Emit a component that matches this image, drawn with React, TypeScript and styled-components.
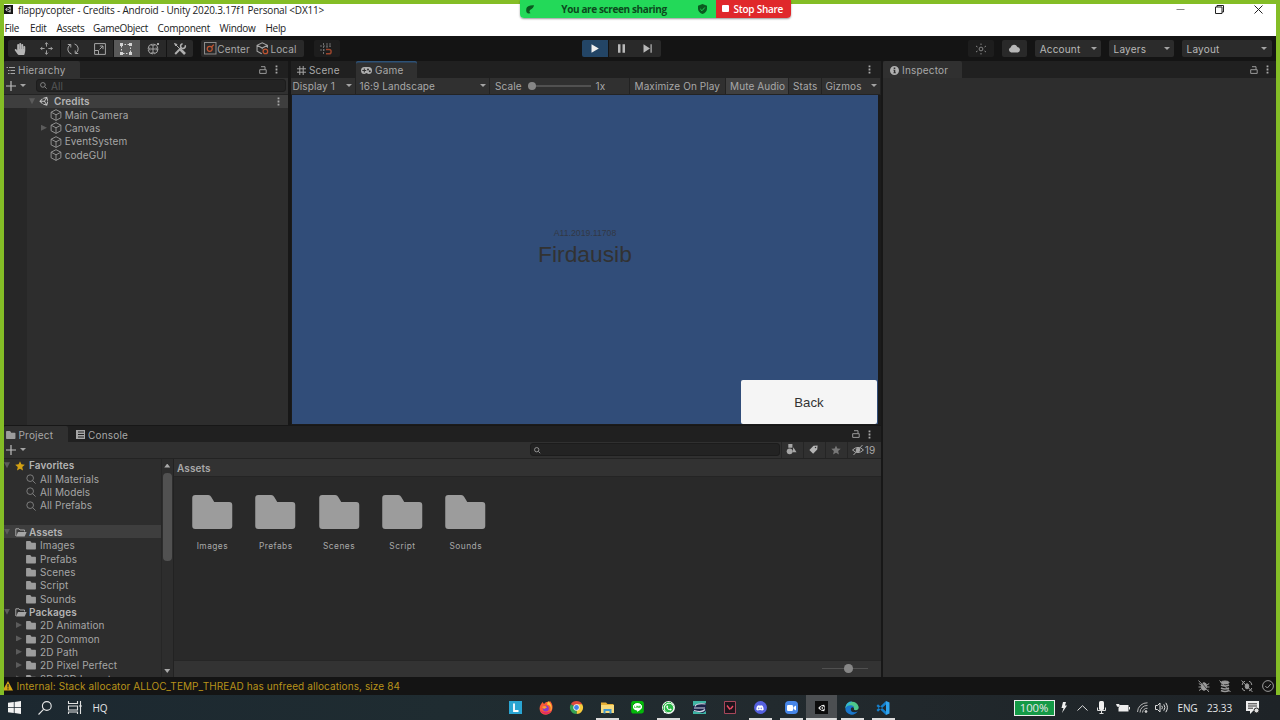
import React from "react";
import styled, { createGlobalStyle, css } from "styled-components";
import { FaUnity, FaHandPaper, FaWhatsapp, FaDiscord, FaLine } from "react-icons/fa";

const Global = createGlobalStyle`
  * { box-sizing: border-box; }
  body { margin: 0; background: #84bd26; overflow: hidden; }
`;

const ui = css`
  font-family: Inter, "Liberation Sans", sans-serif;
  font-size: 10px;
  letter-spacing: 0.1px;
  color: #a8a8a8;
`;
const win = css`
  font-family: "Open Sans", "Noto Sans", sans-serif;
  font-size: 10px;
`;

const Screen = styled.div`
  width: 1280px;
  height: 720px;
  display: flex;
  flex-direction: column;
  position: relative;
  overflow: hidden;
  white-space: nowrap;
  background: #84bd26;
  line-height: 1;
  ${ui}
`;
const Window = styled.div`
  margin: 4px 4px 0;
  height: 691px;
  display: flex;
  flex-direction: column;
  background: #161616;
`;
const Svg = styled.svg`
  display: block;
  flex: none;
  overflow: visible;
`;
const Label = styled.span`
  padding-top: 0.3px;
`;

/* title and menu */
const TitleBar = styled.div`
  ${win}
  height: 13px;
  padding-bottom: 2px;
  background: #fff;
  color: #222;
  display: flex;
  align-items: center;
  letter-spacing: -0.17px;
`;
const AppBadge = styled.div`
  width: 9px;
  height: 9px;
  margin-right: 5px;
  background: #161616;
  color: #ddd;
  font-size: 7px;
  display: flex;
  align-items: center;
  justify-content: center;
`;
const WindowButtons = styled.div`
  margin-left: auto;
  padding-right: 13px;
  display: flex;
  gap: 30px;
  align-items: center;
`;
const MenuBar = styled.div`
  ${win}
  height: 19px;
  padding: 2px 0 0 0.5px;
  background: #fff;
  color: #222;
  display: flex;
  align-items: center;
  letter-spacing: -0.3px;
`;
const MenuItem = styled.span<{ $w: number }>`
  width: ${(p) => p.$w}px;
`;

/* toolbar */
const Toolbar = styled.div`
  height: 25px;
  background: #141414;
  display: flex;
  align-items: center;
  padding: 0 4px 0 3.5px;
  ${Label} { padding-top: 1.6px; }
`;
const ButtonGroup = styled.div<{ $ml?: number }>`
  display: flex;
  gap: 0.6px;
  margin-left: ${(p) => p.$ml ?? 0}px;
`;
const ToolButton = styled.div<{ $w?: number; $tone?: "on" | "play" | "dim"; $start?: boolean }>`
  width: ${(p) => p.$w ?? 26}px;
  height: 17.5px;
  padding-left: ${(p) => (p.$start ? 3.5 : 0)}px;
  padding-right: ${(p) => (p.$start ? 0 : 1)}px;
  display: flex;
  align-items: center;
  justify-content: ${(p) => (p.$start ? "flex-start" : "center")};
  background: ${(p) => (p.$tone === "on" ? "#595959" : p.$tone === "play" ? "#234566" : p.$tone === "dim" ? "#1d1d1d" : "#292929")};
  &:first-child { border-radius: 2px 0 0 2px; }
  &:last-child { border-radius: 0 2px 2px 0; }
  &:only-child { border-radius: 2px; }
`;
const DropButton = styled.div<{ $w: number; $ml: number }>`
  width: ${(p) => p.$w}px;
  margin-left: ${(p) => p.$ml}px;
  height: 17.5px;
  padding: 0 4.5px;
  border-radius: 2px;
  display: flex;
  align-items: center;
  justify-content: space-between;
  background: #2b2b2b;
  color: #b8b8b8;
  letter-spacing: 0.2px;
`;
const Caret = styled.i`
  border: 3.2px solid transparent;
  border-top: 3.8px solid #a4a4a4;
  border-bottom: 0;
  flex: none;
`;

/* docks */
const Workspace = styled.div`
  height: 616px;
  display: flex;
  gap: 2px;
  background: #171717;
`;
const MainColumn = styled.div`
  width: 877px;
  display: flex;
  flex-direction: column;
  gap: 1px;
`;
const UpperRow = styled.div`
  height: 364px;
  display: flex;
  gap: 3px;
`;
const Panel = styled.section<{ $w: number }>`
  width: ${(p) => p.$w}px;
  display: flex;
  flex-direction: column;
  background: #2d2d2d;
  overflow: hidden;
`;
const TabStrip = styled.div<{ $h?: number }>`
  height: ${(p) => p.$h ?? 17}px;
  flex: none;
  display: flex;
  background: #202020;
`;
const Tab = styled.div<{ $w: number; $on?: boolean; $focus?: boolean; $pl?: number }>`
  width: ${(p) => p.$w}px;
  padding-left: ${(p) => p.$pl ?? 2}px;
  padding-top: 1px;
  display: flex;
  align-items: center;
  gap: 3px;
  letter-spacing: 0.2px;
  border-radius: 2px 2px 0 0;
  background: ${(p) => (p.$on ? "#303030" : "transparent")};
  box-shadow: ${(p) => (p.$focus ? "inset 0 1.5px #2c5177" : "none")};
`;
const StripActions = styled.div<{ $pr: number }>`
  margin-left: auto;
  padding-right: ${(p) => p.$pr}px;
  display: flex;
  align-items: center;
  gap: 8px;
`;
const PanelBar = styled.div`
  height: 16.5px;
  flex: none;
  display: flex;
  align-items: center;
  background: #303030;
  border-bottom: 1px solid #232323;
`;
const AddButton = styled.div`
  width: 32px;
  padding-left: 1.5px;
  display: flex;
  align-items: center;
  gap: 4px;
`;
const SearchField = styled.div<{ $w: number; $ml?: number }>`
  width: ${(p) => p.$w}px;
  margin-left: ${(p) => p.$ml ?? 0}px;
  height: 13px;
  border-radius: 3px;
  border: 1px solid #1c1c1c;
  background: #232323;
  color: #565656;
  display: flex;
  align-items: center;
  padding-left: 3px;
  gap: 4px;
`;

/* trees */
const Tree = styled.div<{ $gutter?: boolean }>`
  flex: 1;
  overflow: hidden;
  background: ${(p) => (p.$gutter ? "linear-gradient(90deg, #272727 23px, #2d2d2d 23px)" : "#2d2d2d")};
`;
const TreeRow = styled.div<{ $pl: number; $on?: boolean; $bold?: boolean }>`
  height: 13.34px;
  padding-left: ${(p) => p.$pl}px;
  padding-right: 8px;
  display: flex;
  align-items: center;
  font-weight: ${(p) => (p.$bold ? 600 : 400)};
  color: ${(p) => (p.$bold ? "#b4b4b4" : "#a6a6a6")};
  background: ${(p) => (p.$on ? "#3e3e3e" : "transparent")};
`;
const Fold = styled.i<{ $open?: boolean }>`
  width: 6px;
  height: 6px;
  flex: none;
  background: #5b5b5b;
  clip-path: ${(p) => (p.$open ? "polygon(0 0, 100% 0, 50% 100%)" : "polygon(0 0, 100% 50%, 0 100%)")};
`;
const RowIcon = styled.span<{ $ml?: number; $w?: number }>`
  width: ${(p) => p.$w ?? 14}px;
  margin-left: ${(p) => p.$ml ?? 0}px;
  padding-top: 0.8px;
  flex: none;
  display: flex;
  align-items: center;
`;
const Push = styled.span`
  margin-left: auto;
`;

/* game view */
const GameCell = styled.div<{ $w: number; $on?: boolean; $pl?: number; $between?: boolean }>`
  width: ${(p) => p.$w}px;
  height: 100%;
  padding: 0 3px 0 ${(p) => p.$pl ?? 4}px;
  display: flex;
  align-items: center;
  justify-content: ${(p) => (p.$between ? "space-between" : "flex-start")};
  border-right: 1px solid #222;
  background: ${(p) => (p.$on ? "#404040" : "transparent")};
`;
const ScaleTrack = styled.div`
  width: 63px;
  margin: 0 5px 0 6px;
  height: 1.5px;
  background: #515151;
  display: flex;
  align-items: center;
`;
const Knob = styled.i`
  width: 8.5px;
  height: 8.5px;
  border-radius: 50%;
  background: #868686;
  flex: none;
`;
const GameView = styled.div`
  flex: 1;
  padding: 0 3px 1px 1px;
  background: #1b1b1b;
  display: flex;
`;
const Scene = styled.div`
  flex: 1;
  background: #314d79;
  font-family: "Liberation Sans", Arial, sans-serif;
  letter-spacing: 0;
  color: #323232;
  display: flex;
  flex-direction: column;
  align-items: center;
`;
const StudentId = styled.div`
  margin-top: 134px;
  font-size: 8.7px;
  color: #323844;
`;
const StudentName = styled.div`
  margin-top: 6px;
  font-size: 22.8px;
`;
const BackButton = styled.div`
  width: 136px;
  height: 44px;
  margin: auto 1px 0 auto;
  padding-top: 1px;
  border-radius: 2px;
  background: #f5f5f5;
  display: flex;
  align-items: center;
  justify-content: center;
  font-size: 13.2px;
`;

/* project */
const ProjectPanel = styled.section`
  height: 251px;
  display: flex;
  flex-direction: column;
  background: #2d2d2d;
`;
const ProjectBody = styled.div`
  flex: 1;
  min-height: 0;
  display: flex;
`;
const TreePane = styled.div`
  width: 157px;
  display: flex;
  overflow: hidden;
`;
const ScrollBar = styled.div`
  width: 12.5px;
  border-left: 1px solid #262626;
  border-right: 1px solid #222;
  display: flex;
  flex-direction: column;
  align-items: center;
  padding: 5px 0 4px;
`;
const ScrollArrow = styled.i<{ $down?: boolean }>`
  width: 6px;
  height: 4px;
  background: #aaa;
  clip-path: ${(p) => (p.$down ? "polygon(0 0, 100% 0, 50% 100%)" : "polygon(50% 0, 100% 100%, 0 100%)")};
`;
const ScrollThumb = styled.div`
  width: 9px;
  height: 88px;
  margin: 5px 0 auto;
  border-radius: 4px;
  background: #515151;
`;
const AssetPane = styled.div`
  flex: 1;
  display: flex;
  flex-direction: column;
  background: #292929;
`;
const PathBar = styled.div`
  height: 18px;
  padding: 1px 0 0 3.5px;
  display: flex;
  align-items: center;
  font-weight: 600;
  background: #323232;
  border-bottom: 1px solid #242424;
  ${Label} { padding-top: 1.6px; }
`;
const AssetGrid = styled.div`
  flex: 1;
  padding: 18px 0 0 7.2px;
  display: flex;
`;
const AssetItem = styled.div`
  width: 63.35px;
  display: flex;
  flex-direction: column;
  align-items: center;
  gap: 13px;
  font-size: 8.4px;
  letter-spacing: 0.45px;
`;
const AssetFooter = styled.div`
  height: 17px;
  padding-right: 13px;
  padding-bottom: 1px;
  display: flex;
  align-items: center;
  justify-content: flex-end;
  background: #333;
  border-top: 1px solid #262626;
`;
const ZoomTrack = styled.div`
  width: 46px;
  height: 1.5px;
  background: #505050;
  display: flex;
  align-items: center;
  justify-content: center;
  padding-left: 7px;
`;
const FilterCell = styled.div<{ $w: number }>`
  width: ${(p) => p.$w}px;
  height: 100%;
  border-left: 1px solid #252525;
  padding-right: 1.5px;
  display: flex;
  align-items: center;
  justify-content: center;
`;

const StatusBar = styled.div`
  height: 18px;
  display: flex;
  align-items: center;
  background: #141414;
  color: #b8921a;
  gap: 3.5px;
`;
const StatusIcons = styled.div`
  margin-left: auto;
  padding-right: 2px;
  display: flex;
  gap: 9.5px;
`;

/* taskbar */
const Taskbar = styled.div`
  ${win}
  height: 25px;
  display: flex;
  background: linear-gradient(90deg, #1c2830, #1f2c31 35%, #222a2e 60%, #1e2327);
  color: #e4e6e8;
  letter-spacing: 0;
`;
const TaskLeft = styled.div`
  width: 500px;
  display: flex;
  align-items: center;
`;
const TaskCell = styled.div<{ $w: number }>`
  width: ${(p) => p.$w}px;
  flex: none;
  display: flex;
  align-items: center;
  justify-content: center;
`;
const TaskApp = styled.div<{ $open?: boolean; $active?: boolean }>`
  width: 30.65px;
  display: flex;
  align-items: center;
  justify-content: center;
  background:
    linear-gradient(${(p) => (p.$open || p.$active ? "#dcdcdc, #dcdcdc" : "transparent, transparent")}) center bottom / ${(p) => (p.$active ? "100%" : "23px")} 2px no-repeat,
    ${(p) => (p.$active ? "#4c4f52" : "transparent")};
`;
const Tile = styled.div<{ $bg: string; $fg?: string; $round?: string; $fs?: number }>`
  width: 13px;
  height: 13px;
  background: ${(p) => p.$bg};
  color: ${(p) => p.$fg ?? "#fff"};
  border-radius: ${(p) => p.$round ?? "0"};
  font-size: ${(p) => p.$fs ?? 10}px;
  display: flex;
  align-items: center;
  justify-content: center;
`;
const Tray = styled.div`
  margin-left: auto;
  display: flex;
  align-items: center;
  padding-right: 13px;
  letter-spacing: -0.1px;
`;
const Charge = styled.div`
  width: 41px;
  height: 16px;
  margin-right: 1.5px;
  border: 1.5px solid #eee;
  background: #149a46;
  font-size: 11.3px;
  display: flex;
  align-items: center;
  justify-content: center;
`;

/* share banner */
const ShareBanner = styled.div`
  ${win}
  position: absolute;
  left: 520px;
  top: 0;
  width: 271px;
  height: 18px;
  display: flex;
  border-radius: 0 0 4px 4px;
  overflow: hidden;
  box-shadow: 0 1px 2px #0006;
`;
const ShareStatus = styled.div`
  width: 196px;
  padding: 0 9px 0 6px;
  display: flex;
  align-items: center;
  justify-content: space-between;
  background: #23d959;
  color: #0b4a1d;
  font-weight: 700;
  letter-spacing: -0.38px;
`;
const ShareText = styled.span`
  padding-right: 4px;
`;
const StopShare = styled.div`
  flex: 1;
  padding: 0 0 1px 5.5px;
  display: flex;
  align-items: center;
  gap: 5px;
  background: #e0282b;
  color: #fff;
  font-weight: 600;
  letter-spacing: -0.25px;
`;
const StopSquare = styled.i`
  width: 7px;
  height: 7px;
  border-radius: 1px;
  background: #fff;
`;

type IcoProps = { s?: number; w?: number; c?: string; sw?: number; vb?: number; fill?: boolean; children: React.ReactNode };
const Ico = ({ s = 12, w, c = "#a6a6a6", sw = 1, vb = 12, fill, children }: IcoProps) => (
  <Svg
    width={w ?? s}
    height={s}
    viewBox={`0 0 ${vb} ${vb}`}
    preserveAspectRatio="xMinYMid meet"
    fill={fill ? c : "none"}
    stroke={fill ? "none" : c}
    strokeWidth={sw}
  >
    {children}
  </Svg>
);

const Cube = () => (
  <Ico s={12} sw={0.9} c="#999"><path d="M6 .7 10.9 3.2V8.8L6 11.4 1.1 8.8V3.2ZM1.1 3.2 6 5.8 10.9 3.2M6 5.8V11.4" /></Ico>
);
const Folder = ({ s = 10 }: { s?: number }) => (
  <Svg width={s} height={s * 0.84} viewBox="0 0 40 34" fill="#9c9c9c"><path d="M3 0H16Q18 0 19 2L22 7H37Q40 7 40 10V31Q40 34 37 34H3Q0 34 0 31V3Q0 0 3 0Z" /></Svg>
);
const OpenFolder = () => (
  <Svg width="12" height="9" viewBox="0 0 12 9" fill="none" stroke="#a5a5a5"><path d="M.8 8V.8H4L5 2H9.5V3.5" /><path d="M1 8.4 3 4H11.6L9.7 8.4Z" fill="#a5a5a5" stroke="none" /></Svg>
);
const Magnifier = ({ s = 10, c = "#8c8c8c", sw = 1 }: { s?: number; c?: string; sw?: number }) => (
  <Ico s={s} c={c} sw={sw}><circle cx="5" cy="5" r="4" /><path d="M8 8 11.5 11.5" /></Ico>
);
const Plus = () => <Ico s={10} vb={10} c="#bdbdbd" sw={1.2}><path d="M5 0V10M0 5H10" /></Ico>;
const Dots = () => (
  <Svg width="3" height="9" viewBox="0 0 3 9" fill="#a8a8a8"><path d="M.6.4h1.8v1.8H.6zM.6 3.6h1.8v1.8H.6zM.6 6.8h1.8v1.8H.6z" /></Svg>
);
const Lock = () => (
  <Svg width="8" height="8" viewBox="0 0 8 8" fill="none" stroke="#999"><path d="M.7 3.7H7.2V7.4H.7ZM2 .7H6V3.7" /></Svg>
);

const packages = ["2D Animation", "2D Common", "2D Path", "2D Pixel Perfect", "2D PSD Importer"];
const assetFolders = ["Images", "Prefabs", "Scenes", "Script", "Sounds"];

const MainToolbar = () => (
  <Toolbar>
    <ButtonGroup>
      <ToolButton><FaHandPaper size={12} color="#b5b5b5" /></ToolButton>
      <ToolButton>
        <Ico s={13} vb={14}><path d="M7 .7V5M7 9v4.3M.7 7H5M9 7h4.3M5.3 2.5 7 .8 8.7 2.5M5.3 11.5 7 13.2 8.7 11.5M2.5 5.3.8 7 2.5 8.7M11.5 5.3 13.2 7 11.5 8.7" /></Ico>
      </ToolButton>
      <ToolButton>
        <Ico s={12}><path d="M4.5 11A5 5 0 0 1 3.2 1.9M.8 1.5H3.8V4.5M7.5 1A5 5 0 0 1 8.8 10.1M11.2 10.5H8.2V7.5" /></Ico>
      </ToolButton>
      <ToolButton>
        <Ico s={12}><path d="M.6.6H11.4V11.4H.6ZM.6 7.5H4.5V11.4M5.5 6.5 9 3M5.8 3H9V6.2" /></Ico>
      </ToolButton>
      <ToolButton $tone="on">
        <Ico s={12} c="#d4d4d4"><path d="M1.5 1.5H10.5V10.5H1.5Z" strokeDasharray="1.5 1.5" /><path d="M0 0h3v3H0zM9 0h3v3H9zM0 9h3v3H0zM9 9h3v3H9z" fill="#d4d4d4" stroke="none" /></Ico>
      </ToolButton>
      <ToolButton>
        <Ico s={12}><circle cx="6" cy="6" r="5" strokeDasharray="6.5 1.35" /><path d="M6 1.5V10.5M1.5 6H10.5M4.5 3 6 1.5 7.5 3M4.5 9 6 10.5 7.5 9M3 4.5 1.5 6 3 7.5M9 4.5 10.5 6 9 7.5" /><path d="M10 0h2v2h-2z" fill="#a6a6a6" stroke="none" /></Ico>
      </ToolButton>
      <ToolButton>
        <Ico s={12} c="#b0b0b0"><path d="M1 1 6.2 6.2" /><path d="M6.5 6.5 11 11" strokeWidth="2.6" /><path d="M1.2 11 7 5" strokeWidth="1.9" /><path d="M11.2 2.2A2.4 2.4 0 1 1 8.6.7" strokeWidth="1.6" /><path d="M.5.5 3 1.5 2 3Z" fill="#b0b0b0" /></Ico>
      </ToolButton>
    </ButtonGroup>
    <ButtonGroup $ml={7.5}>
      <ToolButton $w={51} $start>
        <Ico s={12.5} w={13.3}><path d="M.5.5H11.5V11.5H.5Z" stroke="#8c8c8c" /><g stroke="#c05532" strokeWidth="1.2"><circle cx="5.5" cy="6.5" r="2.4" /><path d="M7.2 4.8 9.5 2.5" /></g></Ico>
        <Label>Center</Label>
      </ToolButton>
      <ToolButton $w={52} $start>
        <Ico s={12.5} w={14.8}><path d="M5.5 11.2 1 8.8V3.2L6 .7 11 3.2V5.5M1 3.2 6 5.8 11 3.2M6 5.8V7" /><circle cx="9" cy="9" r="2.2" stroke="#c05532" strokeWidth="1.2" /></Ico>
        <Label>Local</Label>
      </ToolButton>
    </ButtonGroup>
    <ButtonGroup $ml={9.5}>
      <ToolButton $tone="dim">
        <Ico s={12} c="#6f6f6f"><path d="M3.5 0V11M7 0V5M0 3H12M0 7H5M10 0V4" strokeDasharray="2 1" /><path d="M6 6.5H9A2 2 0 0 1 9 10.8H6" stroke="#9c452c" strokeWidth="1.4" /></Ico>
      </ToolButton>
    </ButtonGroup>
    <ButtonGroup $ml={242.3}>
      <ToolButton $tone="play"><Ico s={9} fill vb={9} c="#eee"><path d="M1.5.3 8.8 4.5 1.5 8.7Z" /></Ico></ToolButton>
      <ToolButton><Ico s={9} fill vb={9} c="#b8b8b8"><path d="M1 .3H3.5V8.7H1ZM5.5.3H8V8.7H5.5Z" /></Ico></ToolButton>
      <ToolButton><Ico s={9} fill vb={9} c="#b8b8b8"><path d="M.5.3 7 4.5.5 8.7ZM7.5.3H8.7V8.7H7.5Z" /></Ico></ToolButton>
    </ButtonGroup>
    <ButtonGroup $ml={307}>
      <ToolButton $tone="dim"><Ico s={12} c="#858585"><circle cx="6" cy="6" r="1.9" /><path d="M6 .5V2M6 10V11.5M1 3 2.5 4M9.5 8 11 9M11 3 9.5 4M2.5 8 1 9" /></Ico></ToolButton>
    </ButtonGroup>
    <ButtonGroup $ml={8}>
      <ToolButton $w={25}><Ico s={12.5} fill c="#b8b8b8"><path d="M3 10A2.5 2.5 0 0 1 2.5 5.2 3.5 3.5 0 0 1 9 4.7 2.7 2.7 0 0 1 9.5 10Z" /></Ico></ToolButton>
    </ButtonGroup>
    <DropButton $w={66} $ml={8}><Label>Account</Label><Caret /></DropButton>
    <DropButton $w={65} $ml={8}><Label>Layers</Label><Caret /></DropButton>
    <DropButton $w={90} $ml={8}><Label>Layout</Label><Caret /></DropButton>
  </Toolbar>
);

const Hierarchy = () => (
  <Panel $w={284}>
    <TabStrip>
      <Tab $w={76} $on>
        <Ico s={9} vb={9}><path d="M.5 1.5H2M3 1.5H9M2 4.5H3.5M4.5 4.5H9M2 7.5H3.5M4.5 7.5H9" /></Ico><Label>Hierarchy</Label>
      </Tab>
      <StripActions $pr={10}><Lock /><Dots /></StripActions>
    </TabStrip>
    <PanelBar>
      <AddButton><Plus /><Caret /></AddButton>
      <SearchField $w={250}><Magnifier s={7} c="#8a8a8a" sw={1.6} /><Label>All</Label></SearchField>
    </PanelBar>
    <Tree $gutter>
      <TreeRow $pl={25} $on $bold><Fold $open /><RowIcon $ml={4} $w={15}><FaUnity size={10.5} color="#c4c4c4" /></RowIcon><Label>Credits</Label><Push><Dots /></Push></TreeRow>
      <TreeRow $pl={46}><RowIcon $w={14.7}><Cube /></RowIcon><Label>Main Camera</Label></TreeRow>
      <TreeRow $pl={37}><Fold /><RowIcon $ml={3} $w={14.7}><Cube /></RowIcon><Label>Canvas</Label></TreeRow>
      <TreeRow $pl={46}><RowIcon $w={14.7}><Cube /></RowIcon><Label>EventSystem</Label></TreeRow>
      <TreeRow $pl={46}><RowIcon $w={14.7}><Cube /></RowIcon><Label>codeGUI</Label></TreeRow>
    </Tree>
  </Panel>
);

const Game = () => (
  <Panel $w={590}>
    <TabStrip>
      <Tab $w={65} $pl={6}><Ico s={9} vb={9}><path d="M2.8 0V9M6.2 0V9M0 2.8H9M0 6.2H9" /></Ico><Label>Scene</Label></Tab>
      <Tab $w={61} $pl={5} $on $focus>
        <Svg width="11" height="7" viewBox="0 0 11 7" fill="#b0b0b0"><path fillRule="evenodd" d="M3.5 0H7.5A3.5 3.5 0 0 1 7.5 7L5.5 6 3.5 7A3.5 3.5 0 0 1 3.5 0ZM2.8 1.5V3H1.3V4H2.8V5.5H3.8V4H5.2V3H3.8V1.5ZM7 1.5A1 1 0 1 0 7 3.5 1 1 0 1 0 7 1.5ZM8.8 3.2A1 1 0 1 0 8.8 5.2 1 1 0 1 0 8.8 3.2Z" /></Svg><Label>Game</Label>
      </Tab>
      <StripActions $pr={10}><Dots /></StripActions>
    </TabStrip>
    <PanelBar>
      <GameCell $w={65} $pl={1.5} $between><Label>Display 1</Label><Caret /></GameCell>
      <GameCell $w={134} $pl={3.5} $between><Label>16:9 Landscape</Label><Caret /></GameCell>
      <GameCell $w={140} $pl={5}><Label>Scale</Label><ScaleTrack><Knob /></ScaleTrack><Label>1x</Label></GameCell>
      <GameCell $w={96} $pl={4.5}><Label>Maximize On Play</Label></GameCell>
      <GameCell $w={63} $pl={4}$on><Label>Mute Audio</Label></GameCell>
      <GameCell $w={33}><Label>Stats</Label></GameCell>
      <GameCell $w={59} $pl={3.5} $between><Label>Gizmos</Label><Caret /></GameCell>
    </PanelBar>
    <GameView>
      <Scene>
        <StudentId>A11.2019.11708</StudentId>
        <StudentName>Firdausib</StudentName>
        <BackButton>Back</BackButton>
      </Scene>
    </GameView>
  </Panel>
);

const Project = () => (
  <ProjectPanel>
    <TabStrip $h={16}>
      <Tab $w={64} $on><Folder s={9.5} /><Label>Project</Label></Tab>
      <Tab $w={70} $pl={8}><Ico s={9} vb={9} fill><path fillRule="evenodd" d="M0 0H9V9H0ZM2 1.5V2.5H8V1.5ZM2 4V5H8V4ZM2 6.5V7.5H8V6.5Z" /></Ico><Label>Console</Label></Tab>
      <StripActions $pr={10}><Lock /><Dots /></StripActions>
    </TabStrip>
    <PanelBar>
      <AddButton><Plus /><Caret /></AddButton>
      <SearchField $w={250} $ml={494}><Magnifier s={6.5} c="#a0a0a0" sw={1.6} /></SearchField>
      <Push />
      <FilterCell $w={22}><Ico s={11} fill><path d="M2.5 0H7V4H2.5ZM8 3.5 11.5 9H7Z" /><circle cx="4" cy="8" r="3.2" /></Ico></FilterCell>
      <FilterCell $w={22}><Ico s={9} fill c="#b4b4b4"><path fillRule="evenodd" d="M6 1 11.5.5 11 6 5.5 11.5.5 6.5ZM8.7 2.3A1 1 0 1 0 8.7 4.3 1 1 0 1 0 8.7 2.3Z" /></Ico></FilterCell>
      <FilterCell $w={22}><Ico s={10} fill c="#777"><path d="M6 .5 7.6 4.3 11.7 4.6 8.6 7.3 9.5 11.3 6 9.2 2.5 11.3 3.4 7.3.3 4.6 4.4 4.3Z" /></Ico></FilterCell>
      <FilterCell $w={34}><Ico s={12} w={12.5}><path d="M.5 6Q6 .8 11.5 6 6 11.2.5 6ZM1.5 11 10.5 1" /><circle cx="6" cy="6" r="1.8" fill="#a6a6a6" /></Ico><Label>19</Label></FilterCell>
    </PanelBar>
    <ProjectBody>
      <TreePane>
        <Tree>
          <TreeRow $pl={0} $bold><Fold $open /><RowIcon $ml={5} $w={14}><Ico s={10} fill c="#d2a013"><path d="M6 .2 7.7 4 11.8 4.4 8.7 7.2 9.6 11.5 6 9.3 2.4 11.5 3.3 7.2.2 4.4 4.3 4Z" /></Ico></RowIcon><Label>Favorites</Label></TreeRow>
          {["All Materials", "All Models", "All Prefabs"].map((n) => (
            <TreeRow key={n} $pl={22}><RowIcon><Magnifier /></RowIcon><Label>{n}</Label></TreeRow>
          ))}
          <TreeRow $pl={0} />
          <TreeRow $pl={0} $bold $on><Fold $open /><RowIcon $ml={5}><OpenFolder /></RowIcon><Label>Assets</Label></TreeRow>
          {assetFolders.map((n) => (
            <TreeRow key={n} $pl={22}><RowIcon><Folder /></RowIcon><Label>{n}</Label></TreeRow>
          ))}
          <TreeRow $pl={0} $bold><Fold $open /><RowIcon $ml={5}><OpenFolder /></RowIcon><Label>Packages</Label></TreeRow>
          {packages.map((n) => (
            <TreeRow key={n} $pl={12}><Fold /><RowIcon $ml={4}><Folder /></RowIcon><Label>{n}</Label></TreeRow>
          ))}
        </Tree>
      </TreePane>
      <ScrollBar><ScrollArrow /><ScrollThumb /><ScrollArrow $down /></ScrollBar>
      <AssetPane>
        <PathBar><Label>Assets</Label></PathBar>
        <AssetGrid>
          {assetFolders.map((n) => (
            <AssetItem key={n}><Folder s={40.5} />{n}</AssetItem>
          ))}
        </AssetGrid>
        <AssetFooter><ZoomTrack><Knob /></ZoomTrack></AssetFooter>
      </AssetPane>
    </ProjectBody>
  </ProjectPanel>
);

const TaskIcons = () => (
  <>
    <TaskApp><Tile $bg="#2aa5d2"><Ico s={13} vb={13} c="#fff" sw={1.8}><path d="M5 2.5V10H9.5" /></Ico></Tile></TaskApp>
    <TaskApp>
      <Svg width="14" height="14" viewBox="0 0 14 14">
        <path d="M7 1C10 1 11 .5 11 0 14 3 14 7 12.8 10 10 15 3 15 1 10 0 7 1 4 2.5 2.5L3.5 1 5 3Z" fill="#fb5a35" />
        <path d="M9 0C13 3 14 8 11 11 13 6 11 4 8 3.5Z" fill="#ffc53a" /><path d="M1 9C3 14 10 15 13 9 10 12 5 12 1 9Z" fill="#e52a62" /><circle cx="6.8" cy="7.5" r="3" fill="#8a3bc8" /><path d="M3 6Q6 4 8 6.5L5 8Z" fill="#ff9e2c" />
      </Svg>
    </TaskApp>
    <TaskApp>
      <Svg width="13" height="13" viewBox="0 0 14 14">
        <path d="M7 7 .9 3.5A7 7 0 0 1 13.1 3.5Z" fill="#de4a3b" /><path d="M7 7V3.5H13.1A7 7 0 0 1 7 14Z" fill="#f8cc3c" /><path d="M7 7 7 14A7 7 0 0 1 .9 3.5Z" fill="#35a353" />
        <circle cx="7" cy="7" r="3.4" fill="#f4f4f4" /><circle cx="7" cy="7" r="2.6" fill="#4482e8" />
      </Svg>
    </TaskApp>
    <TaskApp $open>
      <Svg width="13" height="12" viewBox="0 0 13 12"><path d="M0 .5H5L6.5 2H12.5V11H0Z" fill="#e5ae35" /><path d="M0 3H13V11H0Z" fill="#f7da7c" /><path d="M2.5 11.5V7H10.5V11.5H8.5V9H4.5V11.5Z" fill="#4297ce" /></Svg>
    </TaskApp>
    <TaskApp>
      <Tile $bg="radial-gradient(#fff 50%, transparent 52%)"><FaLine size={14.5} color="#04b80a" /></Tile>
    </TaskApp>
    <TaskApp $open>
      <Tile $bg="radial-gradient(circle, #29b845 60%, #eee 62%)" $round="50%" $fs={12}><FaWhatsapp /></Tile>
    </TaskApp>
    <TaskApp>
      <Svg width="13" height="13" viewBox="0 0 13 13"><path d="M0 0H13V13H0Z" fill="#1b2148" /><path d="M0 0H13V2L5 3 0 5ZM0 13H13V10L10 12 0 10Z" fill="#3eb5a4" /><path d="M12.5 3Q3 2 2 5.5M1 7H12M1 9.5Q9 12 12 8.5" stroke="#d4d6e4" strokeWidth="1.2" fill="none" /></Svg>
    </TaskApp>
    <TaskApp>
      <Svg width="12" height="13" viewBox="0 0 12 13" fill="none"><path d="M.5.5H11.5V12.5H.5Z" fill="#1d141c" stroke="#a6475a" /><path d="M3 4.5 6 8.5M6.5 8 9 5" stroke="#ee4b62" strokeWidth="1.4" /></Svg>
    </TaskApp>
    <TaskApp $open><Tile $bg="#5560e0" $round="50%" $fs={8}><FaDiscord /></Tile></TaskApp>
    <TaskApp $open>
      <Tile $bg="#4786e8" $round="4px"><Svg width="9" height="6" viewBox="0 0 9 6" fill="#fff"><rect width="6" height="6" rx="1.2" /><path d="M6.5 2 9 .5V5.5L6.5 4Z" /></Svg></Tile>
    </TaskApp>
    <TaskApp $active><Tile $bg="#0c0c0c" $fs={8}><FaUnity /></Tile></TaskApp>
    <TaskApp $open>
      <Svg width="14" height="14" viewBox="0 0 14 14">
        <path d="M.3 7A6.8 6.8 0 0 1 13.7 6Q14 9 10.5 9.2 8.3 9 9 7.5 9 4.5 5.5 5 2 5.5.3 7Z" fill="#4dc98c" /><path d="M.3 7A6.8 6.8 0 0 1 7 .2Q5 3 .3 7Z" fill="#34b8d6" />
        <path d="M.3 7.5Q2 4 6 4.2 9 4.5 9 7.3 7.5 5.5 6 7.2 5 11 9.5 11.3 11.5 11.3 12.8 10.3 10 14.3 6 13.7 .5 12.5.3 7.5Z" fill="#1a77cc" />
      </Svg>
    </TaskApp>
    <TaskApp $open>
      <Svg width="14" height="14" viewBox="0 0 14 14"><path d="M10 0 13.5 1.5V12.5L10 14Z" fill="#2fa4ee" /><path d="M10 3.5V0L.5 9 2 10.7ZM10 10.5V14L.5 5 2 3.3Z" fill="#1680cc" /></Svg>
    </TaskApp>
  </>
);

export default function App() {
  return (
    <Screen>
      <Global />
      <Window>
        <TitleBar>
          <AppBadge><FaUnity /></AppBadge>
          flappycopter - Credits - Android - Unity 2020.3.17f1 Personal &lt;DX11&gt;
          <WindowButtons>
            <Svg width="9" height="9" viewBox="0 0 9 9" stroke="#888"><path d="M.5 4.5H8.5" /></Svg>
            <Svg width="9" height="9" viewBox="0 0 9 9" stroke="#222" fill="none"><path d="M.5 2H7V8.5H.5ZM2 2V.5H8.5V7H7" /></Svg>
            <Svg width="9" height="9" viewBox="0 0 9 9" stroke="#222"><path d="M.5.5 8.5 8.5M8.5.5.5 8.5" /></Svg>
          </WindowButtons>
        </TitleBar>
        <MenuBar>
          <MenuItem $w={25.5}>File</MenuItem>
          <MenuItem $w={26.5}>Edit</MenuItem>
          <MenuItem $w={36.5}>Assets</MenuItem>
          <MenuItem $w={64.5}>GameObject</MenuItem>
          <MenuItem $w={62}>Component</MenuItem>
          <MenuItem $w={46}>Window</MenuItem>
          <MenuItem $w={30}>Help</MenuItem>
        </MenuBar>
        <MainToolbar />
        <Workspace>
          <MainColumn>
            <UpperRow>
              <Hierarchy />
              <Game />
            </UpperRow>
            <Project />
          </MainColumn>
          <Panel $w={393}>
            <TabStrip>
              <Tab $w={79} $pl={7} $on>
                <Ico s={9} vb={9} fill c="#b0b0b0"><path fillRule="evenodd" d="M4.5 0A4.5 4.5 0 1 0 4.5 9 4.5 4.5 0 1 0 4.5 0ZM3.7 1.5H5.3V3H3.7ZM3.3 3.7H5.3V6.5H6V7.3H3.3V6.5H3.9V4.5H3.3Z" /></Ico><Label>Inspector</Label>
              </Tab>
              <StripActions $pr={7}><Lock /><Dots /></StripActions>
            </TabStrip>
          </Panel>
        </Workspace>
        <StatusBar>
          <Svg width="9" height="10" viewBox="0 0 9 10"><path d="M4 0 9 9.5H0V7Z" fill="#d6a414" /><path d="M4 3V6.5M4 7.3V8.5" stroke="#222" strokeWidth="1.2" /></Svg>
          <Label>Internal: Stack allocator ALLOC_TEMP_THREAD has unfreed allocations, size 84</Label>
          <StatusIcons>
            <Ico c="#9a9a9a"><ellipse cx="6" cy="6.5" rx="2.7" ry="3.8" fill="#9a9a9a" /><path d="M.8 3.5 3 5M.5 7H3M1 10.5 3.5 9M11.2 3.5 9 5M11.5 7H9M11 10.5 8.5 9" /><path d="M1 0 11.5 12" stroke="#141414" /><path d="M.5.5 11 12" /></Ico>
            <Ico c="#9a9a9a"><ellipse cx="6" cy="2.5" rx="4" ry="1.5" fill="#9a9a9a" /><path d="M2 5Q6 7 10 5M2 8Q6 10 10 8M2 10.5Q6 12.5 10 10.5" strokeWidth="1.6" /><path d="M.5.5 11.5 12" /></Ico>
            <Ico c="#9a9a9a"><path d="M4 1.2Q1.2 2 1.2 5M8 1.2Q10.8 2 10.8 5M10.8 8Q10 10.8 8 10.8M4 10.8Q1.5 10.5 1.2 8" /><ellipse cx="6" cy="6.3" rx="1.8" ry="2.6" fill="#9a9a9a" /><path d="M.5.5 11.5 12" /></Ico>
            <Ico c="#9a9a9a"><circle cx="6" cy="6" r="5.4" /><path d="M3.3 6 5.3 8 8.8 4" /></Ico>
          </StatusIcons>
        </StatusBar>
      </Window>
      <Taskbar>
        <TaskLeft>
          <TaskCell $w={29}><Svg width="13" height="13" viewBox="0 0 13 13" fill="#f2f2f2"><path d="M0 1.8 5.8 1V6.2H0ZM6.6.9 13 0V6.2H6.6ZM0 7H5.8V12L0 11.2ZM6.6 7H13V13L6.6 12.1Z" /></Svg></TaskCell>
          <TaskCell $w={31}><Svg width="14" height="14" viewBox="0 0 14 14" fill="none" stroke="#e8e8e8" strokeWidth="1.1"><circle cx="8.8" cy="5" r="4.4" /><path d="M5.5 8.3.5 13.5" /></Svg></TaskCell>
          <TaskCell $w={30}><Svg width="14" height="13" viewBox="0 0 14 13" fill="none" stroke="#e0e0e0" strokeWidth="1.1"><path d="M.5 0V2.5H9.5V0M.5 5H9.5V9H.5ZM.5 13V11H9.5V13M12.5 0V13" /><path d="M11.5 4h2v2h-2z" fill="#e0e0e0" stroke="none" /></Svg></TaskCell>
          <TaskCell $w={20}>HQ</TaskCell>
        </TaskLeft>
        <TaskIcons />
        <Tray>
          <Charge>100%</Charge>
          <TaskCell $w={15}><Svg width="6" height="11" viewBox="0 0 6 11" fill="#eee"><path d="M2 0H5L4 3.5H6L1 11 2.5 6H.5Z" /></Svg></TaskCell>
          <TaskCell $w={23}><Svg width="11" height="6" viewBox="0 0 11 6" fill="none" stroke="#ddd"><path d="M.5 5.5 5.5.7 10.5 5.5" /></Svg></TaskCell>
          <TaskCell $w={15}><Svg width="9" height="13" viewBox="0 0 9 13"><rect x="2" width="5" height="9" rx="1.5" fill="#f0f0f0" /><path d="M.5 6.5V9.5H8.5V6.5M4.5 9.5V12.5M2.5 12.5H6.5" fill="none" stroke="#ddd" /></Svg></TaskCell>
          <TaskCell $w={27}><Svg width="14" height="9" viewBox="0 0 14 9" fill="#eee"><path d="M4 2H12.5V8.5H2.5V5ZM13 4H14V6.5H13Z" /><path d="M0 1H3L4 2.5 2.5 4 1 3.5ZM3 0 4.5 2" /></Svg></TaskCell>
          <TaskCell $w={13}><Svg width="11" height="11" viewBox="0 0 11 11" fill="none" stroke="#b8b8b8"><path d="M.5 10A9.5 9.5 0 0 1 10.5.8M3 10.5A7 7 0 0 1 10.5 3.5M5.5 10.5A4.5 4.5 0 0 1 10.5 6.3" /><circle cx="9" cy="9.5" r="1" fill="#fff" /></Svg></TaskCell>
          <TaskCell $w={25}><Svg width="13" height="11" viewBox="0 0 13 11" fill="none" stroke="#ddd"><path d="M.5 3.5H2.5L5 1V10L2.5 7.5H.5ZM6.8 3.8Q8 5.5 6.8 7.2M8.8 2.3Q11 5.5 8.8 8.7M10.8.8Q14 5.5 10.8 10.2" /></Svg></TaskCell>
          <TaskCell $w={27}>ENG</TaskCell>
          <TaskCell $w={37}>23.33</TaskCell>
          <TaskCell $w={29}><Svg width="14" height="13" viewBox="0 0 14 13"><path d="M0 0H13V10H7L4 13V10H0Z" fill="#eee" /><path d="M2 2.8H11M2 5H11M2 7.2H7" stroke="#333" /><circle cx="10.5" cy="9.5" r="2.5" fill="#ddd" stroke="#222" /></Svg></TaskCell>
        </Tray>
      </Taskbar>
      <ShareBanner>
        <ShareStatus>
          <Svg width="8" height="9" viewBox="0 0 8 9" fill="#0a5a20"><path d="M8 .3Q1 0 .3 3.8 0 6 .5 7.2L2 8.5 4.5 8.2Q2.5 6.5 4 5 7.5 3.5 8 .3Z" /></Svg>
          <ShareText>You are screen sharing</ShareText>
          <Svg width="9" height="10" viewBox="0 0 9 10"><path d="M4.5 0 9 1.8V5Q8.5 8.5 4.5 10 .5 8.5 0 5V1.8Z" fill="#0a5a20" /><path d="M2.3 5 4 6.7 6.8 3.5" stroke="#23d959" fill="none" /></Svg>
        </ShareStatus>
        <StopShare><StopSquare />Stop Share</StopShare>
      </ShareBanner>
    </Screen>
  );
}
